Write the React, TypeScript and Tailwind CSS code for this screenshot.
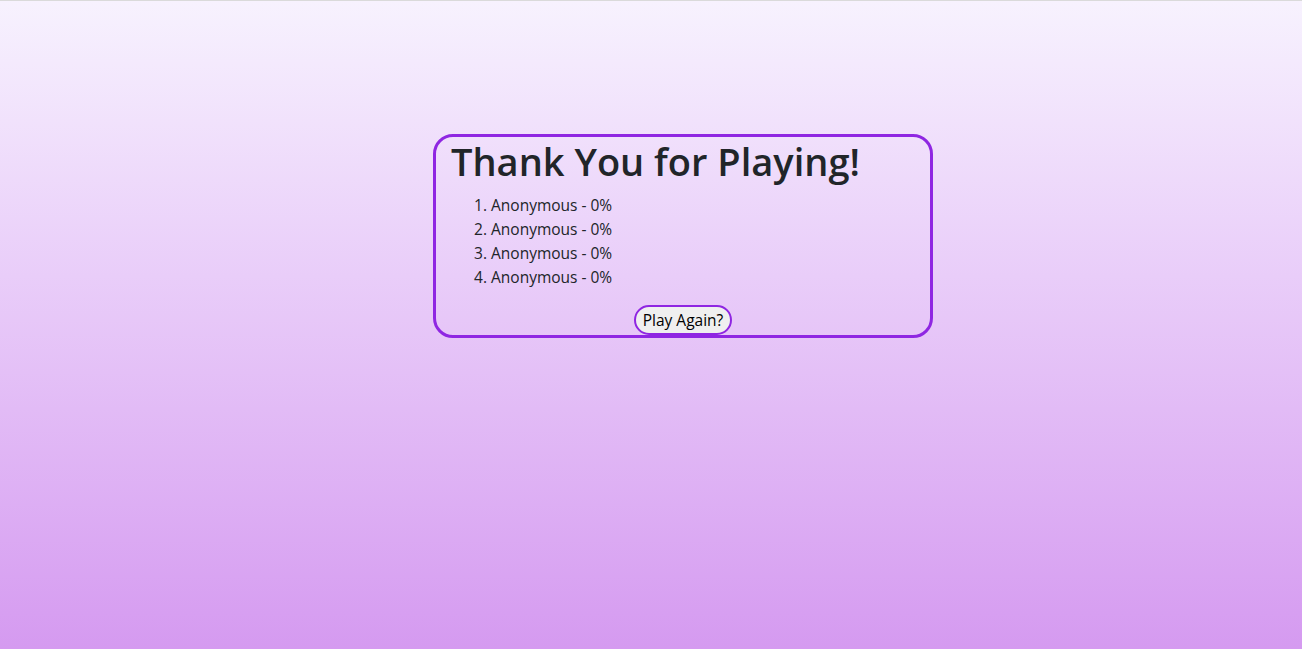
export default function App() {
  const scores = ["Anonymous - 0%", "Anonymous - 0%", "Anonymous - 0%", "Anonymous - 0%"];
  return (
    <div
      className="min-h-[649px] border-t border-[#dadada] bg-gradient-to-b from-[#f7f2fe] to-[#d59af0] pt-[133px] pl-16 text-[#212529]"
      style={{ fontFamily: '"Open Sans", "Noto Sans", sans-serif' }}
    >
      <div className="mx-auto w-[500px] rounded-[20px] border-[3px] border-[#8f26e2] px-[15px]">
        <h1 className="mb-2 text-[38px] leading-[48px] font-semibold">Thank You for Playing!</h1>
        <ol className="mb-4 list-decimal pl-10 text-[15.5px] leading-6">
          {scores.map((s, i) => (
            <li key={i}>{s}</li>
          ))}
        </ol>
        <div className="flex justify-center">
          <button className="rounded-full border-2 border-[#8f26e2] bg-[#efefef] px-[7px] py-px text-[15.5px] leading-6 text-black">
            Play Again?
          </button>
        </div>
      </div>
    </div>
  );
}
